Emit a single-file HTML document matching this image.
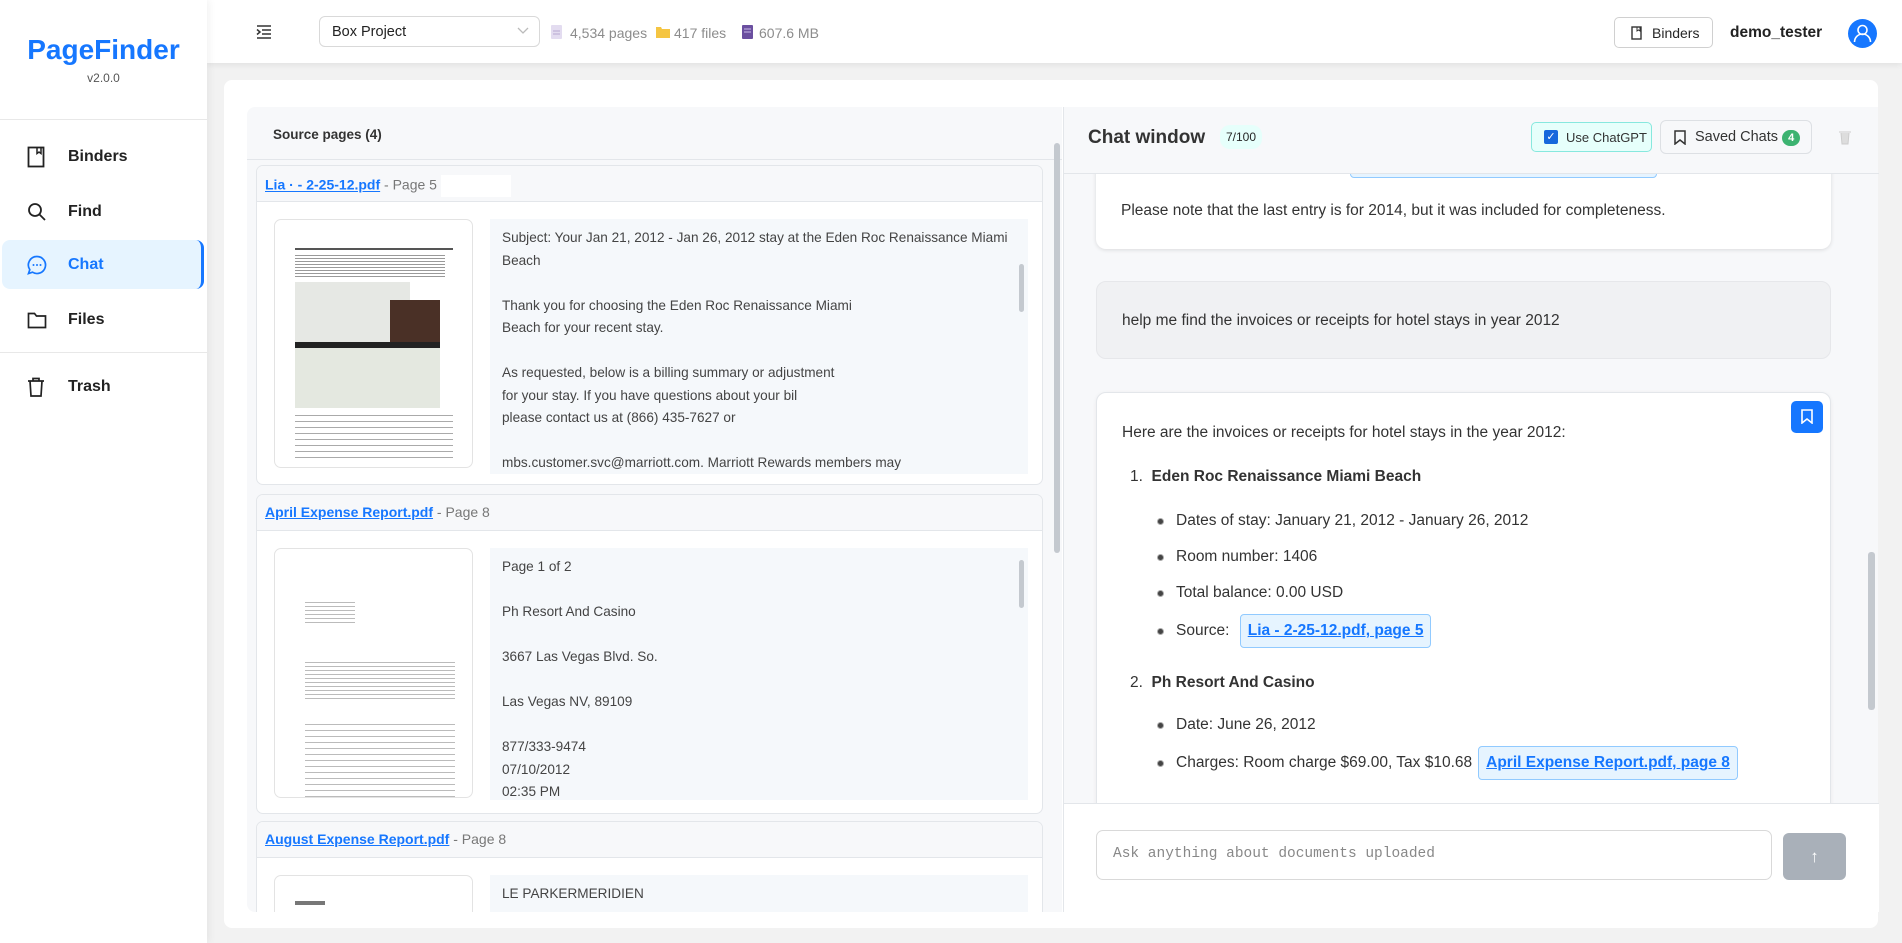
<!DOCTYPE html>
<html><head><meta charset="utf-8">
<style>
*{box-sizing:border-box;margin:0;padding:0}
body{width:1902px;height:943px;overflow:hidden;background:#f2f2f2;font-family:"Liberation Sans",sans-serif;color:#262626;position:relative}
.abs{position:absolute}
.side{left:0;top:0;width:207px;height:943px;background:#fff;box-shadow:2px 0 8px rgba(0,0,0,.06);z-index:3}
.logo{left:0;width:207px;top:34px;text-align:center;font-size:28px;font-weight:bold;color:#1677ff}
.ver{left:0;width:207px;top:71px;text-align:center;font-size:12px;color:#555}
.hr{left:0;width:207px;height:1px;background:#e8e8e8}
.nav{left:2px;width:202px;height:49px;display:flex;align-items:center;font-size:16px;font-weight:bold;color:#222}
.nav svg{position:absolute;left:25px}
.nav span{position:absolute;left:66px}
.nav.act{background:#e6f4ff;color:#1677ff;border-radius:8px;border-right:3px solid #1677ff}
.head{left:207px;top:0;width:1695px;height:63px;background:#fff;box-shadow:0 2px 6px rgba(0,0,0,.07);z-index:2}
.gray{color:#8c8c8c;font-size:14px}
.main{left:224px;top:80px;width:1654px;height:848px;background:#fff;border-radius:8px}
.lp{left:247px;top:107px;width:815px;height:805px;background:#f7f8fa;border-radius:8px 0 0 8px;overflow:hidden}
.card{position:absolute;left:9px;width:787px;background:#fff;border:1px solid #e3e6ea;border-radius:7px;overflow:hidden}
.ch{height:36px;background:#f7f8fa;border-bottom:1px solid #e3e6ea;font-size:14px;padding:9px 8px;color:#777}
.ch a{color:#1677ff;text-decoration:underline;font-weight:bold}
.thumb{position:absolute;left:17px;width:199px;border:1px solid #e3e3e3;border-radius:7px;background:#fff;overflow:hidden}
.tb{position:absolute;left:233px;width:538px;background:#f5f8fb;font-size:13.6px;line-height:22.5px;color:#444;padding:8px 12px 8px 12px;overflow:hidden}
.sb{position:absolute;right:4px;width:5px;background:#c4c9cf;border-radius:3px}
.rp{left:1063px;top:107px;width:815px;height:805px;background:#f7f8fa;border-left:1px solid #e3e6ea}
.msg{position:absolute;left:32px;width:735px;border-radius:10px;font-size:15.5px;color:#333}
.row{position:absolute;display:flex;align-items:center;font-size:15.5px;color:#333;white-space:nowrap}
.bul{display:inline-block;width:7px;height:7px;border-radius:50%;background:#444;border:1px solid #aaa;margin-right:12px}
.link{display:inline-block;background:#e6f4ff;border:1px solid #91caff;border-radius:4px;color:#1677ff;text-decoration:underline;font-weight:bold;font-size:15.5px;padding:7px 7px;margin-left:6px}
</style></head><body>
<div class="abs side">
 <div class="abs logo">PageFinder</div>
 <div class="abs ver">v2.0.0</div>
 <div class="abs hr" style="top:119px"></div>
 <div class="abs nav" style="top:132px"><svg width="18" height="22" viewBox="0 0 18 22"><rect x="1.5" y="1.5" width="15" height="19" fill="none" stroke="#222" stroke-width="1.8"/><path d="M10 1.5v6l2-1.5 2 1.5v-6" fill="none" stroke="#222" stroke-width="1.5"/></svg><span>Binders</span></div>
 <div class="abs nav" style="top:187px"><svg width="20" height="20" viewBox="0 0 20 20"><circle cx="8" cy="8" r="6" fill="none" stroke="#222" stroke-width="1.8"/><path d="M12.5 12.5l5.5 5.5" stroke="#222" stroke-width="1.8"/></svg><span>Find</span></div>
 <div class="abs nav act" style="top:240px"><svg width="20" height="20" viewBox="0 0 20 20"><path d="M10 1.5a8.5 8.5 0 1 1-4.5 15.7L1.5 18.5l1.3-3.8A8.5 8.5 0 0 1 10 1.5z" fill="none" stroke="#1677ff" stroke-width="1.7"/><circle cx="6.5" cy="10" r="1" fill="#1677ff"/><circle cx="10" cy="10" r="1" fill="#1677ff"/><circle cx="13.5" cy="10" r="1" fill="#1677ff"/></svg><span>Chat</span></div>
 <div class="abs nav" style="top:295px"><svg width="20" height="18" viewBox="0 0 20 18"><path d="M1.5 2.5h6l2 2.5h9v11.5h-17z" fill="none" stroke="#222" stroke-width="1.7"/></svg><span>Files</span></div>
 <div class="abs hr" style="top:352px"></div>
 <div class="abs nav" style="top:362px"><svg width="18" height="20" viewBox="0 0 18 20"><path d="M1 4h16M6 4V1.5h6V4M3 4l1 15h10l1-15" fill="none" stroke="#222" stroke-width="1.7"/></svg><span>Trash</span></div>
</div>
<div class="abs head">
 <svg class="abs" style="left:49px;top:25px" width="16" height="14" viewBox="0 0 16 14"><path d="M1 1h14M6 5h9M6 9h9M1 13h14M1 4.5l3 2.5-3 2.5" fill="none" stroke="#333" stroke-width="1.5"/></svg>
 <div class="abs" style="left:112px;top:16px;width:221px;height:31px;border:1px solid #d9d9d9;border-radius:6px;font-size:14.5px;padding:7px 12px;color:#222">Box Project<svg class="abs" style="right:10px;top:10px" width="12" height="8" viewBox="0 0 12 8"><path d="M1 1l5 5 5-5" fill="none" stroke="#bbb" stroke-width="1.3"/></svg></div>
 <svg class="abs" style="left:344px;top:25px" width="11" height="14"><rect width="11" height="14" rx="1" fill="#e3dcf0"/><path d="M2 6h7M2 9h7" stroke="#b7a9d0"/></svg>
 <div class="abs gray" style="left:363px;top:25px">4,534 pages</div>
 <svg class="abs" style="left:449px;top:26px" width="14" height="12"><path d="M0 1h5l1 2h8v9H0z" fill="#f5c542"/></svg>
 <div class="abs gray" style="left:467px;top:25px">417 files</div>
 <svg class="abs" style="left:535px;top:25px" width="11" height="14"><rect width="11" height="14" rx="1" fill="#6b4fa0"/><path d="M2 4h7M2 7h7" stroke="#c9b8e8"/></svg>
 <div class="abs gray" style="left:552px;top:25px">607.6 MB</div>
 <div class="abs" style="left:1407px;top:17px;width:99px;height:31px;border:1px solid #d0d0d0;border-radius:5px;font-size:14px;padding:7px 0 0 37px">Binders<svg class="abs" style="left:16px;top:8px" width="11" height="14" viewBox="0 0 11 14"><rect x="1" y="1" width="9" height="12" fill="none" stroke="#333" stroke-width="1.4"/><path d="M6 1v4l1.5-1 1.5 1V1" fill="none" stroke="#333"/></svg></div>
 <div class="abs" style="left:1523px;top:24px;font-size:15.5px;font-weight:bold;color:#222">demo_tester</div>
 <svg class="abs" style="left:1641px;top:19px" width="29" height="29" viewBox="0 0 29 29"><circle cx="14.5" cy="14.5" r="14.5" fill="#1677ff"/><circle cx="14.5" cy="11" r="4.5" fill="none" stroke="#fff" stroke-width="1.6"/><path d="M6.5 23a8 8 0 0 1 16 0" fill="none" stroke="#fff" stroke-width="1.6"/></svg>
</div>
<div class="abs main"></div>
<div class="abs lp">
 <div class="abs" style="left:26px;top:20px;font-size:13.5px;font-weight:bold;color:#333">Source pages (4)</div>
 <div class="abs" style="left:0;top:52px;width:815px;height:1px;background:#e3e6ea"></div>
 <div class="card" style="top:58px;height:320px">
  <div class="ch"><a>Lia · - 2-25-12.pdf</a> - Page 5 <span style="display:inline-block;width:70px;height:22px;background:#fff;vertical-align:middle"></span></div>
  <div class="thumb" style="top:53px;height:249px">
   <div class="abs" style="left:20px;top:28px;width:158px;height:2px;background:#555"></div>
   <div class="abs" style="left:20px;top:33px;width:150px;height:24px;background:repeating-linear-gradient(#fff 0 2px,#999 2px 3px)"></div>
   <div class="abs" style="left:20px;top:62px;width:115px;height:60px;background:#e6e8e4"></div>
   <div class="abs" style="left:115px;top:80px;width:50px;height:44px;background:#4a3026"></div>
   <div class="abs" style="left:20px;top:122px;width:145px;height:6px;background:#222"></div>
   <div class="abs" style="left:20px;top:128px;width:145px;height:60px;background:#e4e8e0"></div>
   <div class="abs" style="left:20px;top:190px;width:158px;height:52px;background:repeating-linear-gradient(#fff 0 5px,#aaa 5px 6px)"></div>
  </div>
  <div class="tb" style="top:53px;height:255px">Subject: Your Jan 21, 2012 - Jan 26, 2012 stay at the Eden Roc Renaissance Miami Beach<br><br>Thank you for choosing the Eden Roc Renaissance Miami<br>Beach for your recent stay.<br><br>As requested, below is a billing summary or adjustment<br>for your stay. If you have questions about your bil<br>please contact us at (866) 435-7627 or<br><br>mbs.customer.svc@marriott.com. Marriott Rewards members may<div class="sb" style="top:45px;height:48px"></div></div>
 </div>
 <div class="card" style="top:387px;height:320px">
  <div class="ch"><a>April Expense Report.pdf</a> - Page 8</div>
  <div class="thumb" style="top:53px;height:250px">
   <div class="abs" style="left:30px;top:50px;width:50px;height:24px;background:repeating-linear-gradient(#fff 0 3px,#bbb 3px 4px)"></div>
   <div class="abs" style="left:30px;top:110px;width:150px;height:40px;background:repeating-linear-gradient(#fff 0 3px,#bbb 3px 4px)"></div>
   <div class="abs" style="left:30px;top:170px;width:150px;height:80px;background:repeating-linear-gradient(#fff 0 5px,#bbb 5px 6px)"></div>
  </div>
  <div class="tb" style="top:53px;height:252px">Page 1 of 2<br><br>Ph Resort And Casino<br><br>3667 Las Vegas Blvd. So.<br><br>Las Vegas NV, 89109<br><br>877/333-9474<br>07/10/2012<br>02:35 PM<div class="sb" style="top:12px;height:48px"></div></div>
 </div>
 <div class="card" style="top:714px;height:120px">
  <div class="ch"><a>August Expense Report.pdf</a> - Page 8</div>
  <div class="thumb" style="top:53px;height:80px"><div class="abs" style="left:20px;top:25px;width:30px;height:4px;background:#777"></div></div>
  <div class="tb" style="top:53px;height:80px">LE PARKERMERIDIEN</div>
 </div>
 <div class="abs" style="left:807px;top:36px;width:6px;height:410px;background:#c4c9cf;border-radius:3px"></div>
</div>
<div class="abs rp">
 <div class="abs" style="left:24px;top:20px;font-size:19px;font-weight:bold;color:#333">Chat window</div>
 <div class="abs" style="left:156px;top:18px;background:#e6fffb;border-radius:10px;font-size:12px;padding:5px 6px">7/100</div>
 <div class="abs" style="left:467px;top:15px;width:121px;height:30px;background:#e6fffb;border:1px solid #87e8de;border-radius:5px;font-size:13px;padding:7px 0 0 34px;color:#333;white-space:nowrap">Use ChatGPT<div class="abs" style="left:12px;top:7px;width:14px;height:14px;background:#1668dc;border-radius:2px;color:#fff;font-size:11px;line-height:14px;text-align:center">✓</div></div>
 <div class="abs" style="left:596px;top:13px;width:152px;height:34px;border:1px solid #dde0e4;border-radius:6px;font-size:14.5px;padding:8px 0 0 34px;color:#333;white-space:nowrap">Saved Chats <span style="display:inline-block;background:#3cb371;color:#fff;border-radius:9px;font-size:11px;font-weight:bold;padding:2px 6px">4</span><svg class="abs" style="left:13px;top:9px" width="12" height="15" viewBox="0 0 12 15"><path d="M1 1h10v13l-5-4-5 4z" fill="none" stroke="#333" stroke-width="1.5"/></svg></div>
 <svg class="abs" style="left:774px;top:23px" width="14" height="15"><path d="M1 2h12M3 3l1 11h6l1-11" fill="#ddd" stroke="#ccc"/></svg>
 <div class="abs" style="left:0;top:66px;width:815px;height:1px;background:#e3e6ea"></div>
 <div class="abs" style="left:0;top:67px;width:815px;height:629px;overflow:hidden">
  <div class="msg" style="top:-40px;height:115px;background:#fff;box-shadow:0 1px 4px rgba(0,0,0,.12)">
   <div class="abs" style="left:254px;top:30px;width:307px;height:14px;background:#e6f4ff;border:1px solid #91caff;border-radius:4px"></div>
   <div class="abs" style="left:25px;top:68px">Please note that the last entry is for 2014, but it was included for completeness.</div>
  </div>
  <div class="msg" style="top:107px;height:78px;background:#f0f1f3;border:1px solid #e6e7ea"><div class="abs" style="left:25px;top:30px">help me find the invoices or receipts for hotel stays in year 2012</div></div>
  <div class="msg" style="top:218px;height:430px;background:#fff;border:1px solid #e3e6ea;box-shadow:0 1px 4px rgba(0,0,0,.06)">
   <div class="abs" style="left:694px;top:8px;width:32px;height:32px;background:#1677ff;border-radius:5px"><svg class="abs" style="left:10px;top:8px" width="12" height="15" viewBox="0 0 12 15"><path d="M1 1h10v13l-5-4-5 4z" fill="none" stroke="#fff" stroke-width="1.6"/></svg></div>
   <div class="abs" style="left:25px;top:31px">Here are the invoices or receipts for hotel stays in the year 2012:</div>
   <div class="row" style="left:33px;top:75px">1.&nbsp;&nbsp;<b>Eden Roc Renaissance Miami Beach</b></div>
   <div class="row" style="left:60px;top:119px"><span class="bul"></span>Dates of stay: January 21, 2012 - January 26, 2012</div>
   <div class="row" style="left:60px;top:155px"><span class="bul"></span>Room number: 1406</div>
   <div class="row" style="left:60px;top:191px"><span class="bul"></span>Total balance: 0.00 USD</div>
   <div class="row" style="left:60px;top:221px"><span class="bul"></span>Source:&nbsp;<span class="link">Lia - 2-25-12.pdf, page 5</span></div>
   <div class="row" style="left:33px;top:281px">2.&nbsp;&nbsp;<b>Ph Resort And Casino</b></div>
   <div class="row" style="left:60px;top:323px"><span class="bul"></span>Date: June 26, 2012</div>
   <div class="row" style="left:60px;top:353px"><span class="bul"></span>Charges: Room charge $69.00, Tax $10.68<span class="link">April Expense Report.pdf, page 8</span></div>
  </div>
 </div>
 <div class="abs" style="left:804px;top:445px;width:7px;height:158px;background:#c4c9cf;border-radius:3px"></div>
 <div class="abs" style="left:0;top:696px;width:815px;height:1px;background:#e3e6ea"></div>
 <div class="abs" style="left:0;top:697px;width:815px;height:108px;background:#fff"></div>
 <div class="abs" style="left:32px;top:723px;width:676px;height:50px;border:1px solid #d9d9d9;border-radius:7px;background:#fff;font-family:'Liberation Mono',monospace;font-size:14.5px;color:#888;padding:15px 16px">Ask anything about documents uploaded</div>
 <div class="abs" style="left:719px;top:726px;width:63px;height:47px;background:#a9b0b9;border-radius:6px;color:#fff;text-align:center;font-size:17px;line-height:47px">↑</div>
</div>
</body></html>
